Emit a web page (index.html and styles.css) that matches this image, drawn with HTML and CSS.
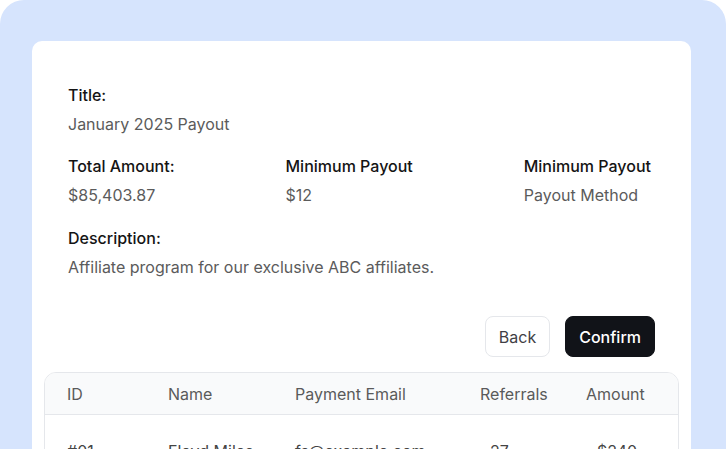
FILE: index.html
```html
<!DOCTYPE html>
<html lang="en">
<head>
<meta charset="utf-8">
<title>Payout</title>
<link rel="stylesheet" href="styles.css">
</head>
<body>
<div class="panel">
  <div class="card">
    <div class="field">
      <div class="label">Title:</div>
      <div class="value">January 2025 Payout</div>
    </div>
    <div class="row3">
      <div class="field">
        <div class="label">Total Amount:</div>
        <div class="value">$85,403.87</div>
      </div>
      <div class="field">
        <div class="label">Minimum Payout</div>
        <div class="value">$12</div>
      </div>
      <div class="field">
        <div class="label">Minimum Payout</div>
        <div class="value">Payout Method</div>
      </div>
    </div>
    <div class="field">
      <div class="label">Description:</div>
      <div class="value">Affiliate program for our exclusive ABC affiliates.</div>
    </div>
    <div class="actions">
      <button class="btn btn-back">Back</button>
      <button class="btn btn-confirm">Confirm</button>
    </div>
    <div class="table">
      <div class="thead">
        <div class="c-id">ID</div>
        <div class="c-name">Name</div>
        <div class="c-email">Payment Email</div>
        <div class="c-ref">Referrals</div>
        <div class="c-amt">Amount</div>
      </div>
      <div class="trow">
        <div class="c-id">#01</div>
        <div class="c-name">Floyd Miles</div>
        <div class="c-email">fs@example.com</div>
        <div class="c-ref num-ref">27</div>
        <div class="c-amt num-amt">$240</div>
      </div>
    </div>
  </div>
</div>
</body>
</html>
```

FILE: styles.css
```css
html, body {
  margin: 0;
  padding: 0;
  background: #ffffff;
  height: 100%;
  overflow: hidden;
}
body {
  font-family: Inter, "Noto Sans", "Liberation Sans", sans-serif;
  -webkit-font-smoothing: antialiased;
}
.panel {
  background: #d6e4fd;
  border-radius: 24px 24px 0 0;
  padding: 41px 35px 0 32px;
  min-height: 100%;
  box-sizing: border-box;
}
.card {
  background: #ffffff;
  border-radius: 10px 10px 0 0;
  padding: 43px 36px 40px 36px;
  min-height: 420px;
}
.field {
  display: flex;
  flex-direction: column;
  gap: 7px;
}
.label {
  font-size: 16px;
  line-height: 22px;
  font-weight: 500;
  color: #141414;
}
.value {
  font-size: 16px;
  line-height: 22px;
  color: #5b5b5b;
}
.row3 {
  display: flex;
  justify-content: space-between;
  padding-right: 4px;
  margin-top: 20px;
  margin-bottom: 21px;
}
.actions {
  display: flex;
  justify-content: flex-end;
  gap: 15px;
  margin-top: 38px;
}
.btn {
  font-family: Inter, "Noto Sans", "Liberation Sans", sans-serif;
  font-size: 16px;
  line-height: 20px;
  height: 41px;
  padding: 0 13px;
  border-radius: 8px;
  cursor: pointer;
}
.btn-back {
  background: #ffffff;
  border: 1px solid #e5e7eb;
  color: #3f3f46;
}
.btn-confirm {
  background: #111318;
  border: 1px solid #111318;
  color: #ffffff;
  font-weight: 500;
}
.table {
  margin: 15px -24px 0 -24px;
  border: 1px solid #e5e7eb;
  border-radius: 12px;
  overflow: hidden;
}
.thead, .trow {
  display: grid;
  grid-template-columns: 101px 127px 185px 106px 1fr;
  padding-left: 22px;
  font-size: 16px;
  line-height: 22px;
  color: #5a5a5a;
}
.thead {
  background: #f9fafb;
  border-bottom: 1px solid #e5e7eb;
  height: 41px;
  align-items: center;
}
.trow {
  padding-top: 25px;
  padding-bottom: 25px;
  color: #444444;
}
.num-ref {
  padding-left: 10px;
}
.num-amt {
  padding-left: 11px;
}
```
